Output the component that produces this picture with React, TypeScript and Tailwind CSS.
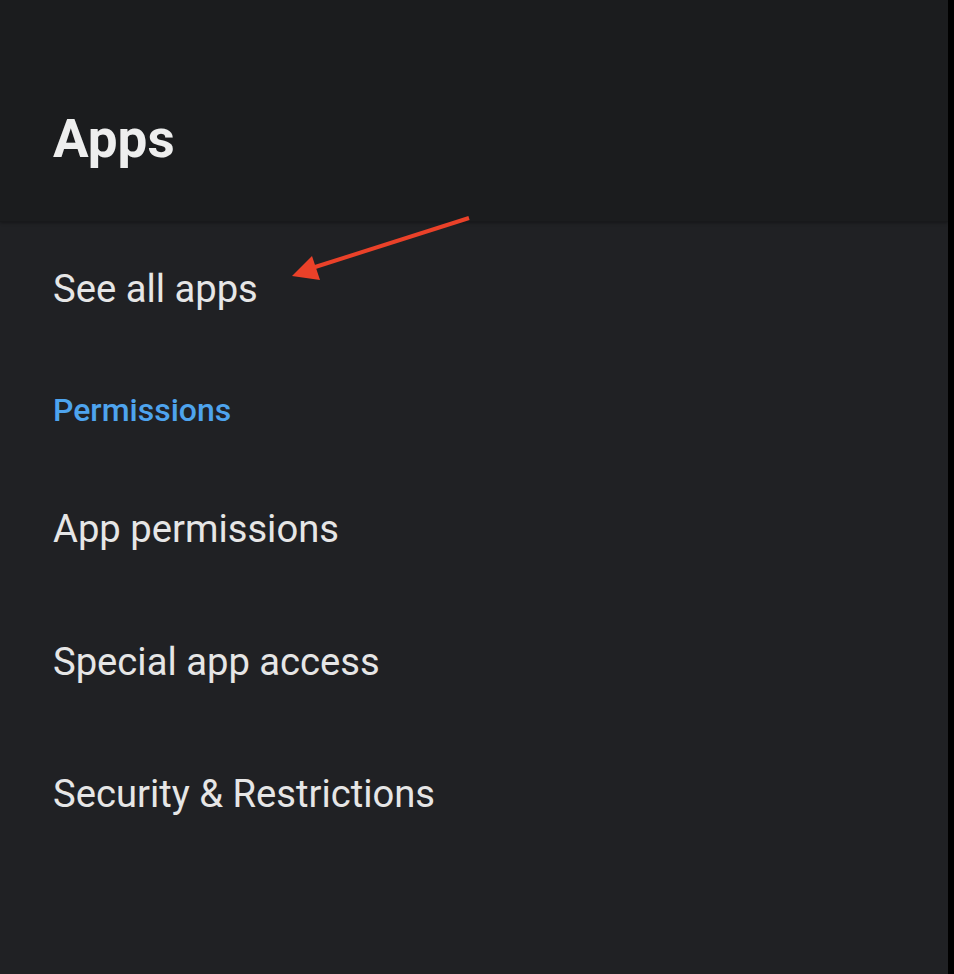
import React from 'react';

const items = [
  { label: 'See all apps', kind: 'item' },
  { label: 'Permissions', kind: 'section' },
  { label: 'App permissions', kind: 'item' },
  { label: 'Special app access', kind: 'item' },
  { label: 'Security & Restrictions', kind: 'item' },
];

export default function App() {
  return (
    <div className="relative flex h-[974px] w-[954px] bg-black font-['Roboto',sans-serif]">
      <div className="flex w-[948px] flex-col bg-[#202124]">
        <header className="flex h-[222px] items-start border-b border-[#18191b] bg-[#1b1c1e] pl-[53px] pt-[113px] shadow-[0_1px_3px_rgba(0,0,0,0.35)]">
          <h1 className="text-[53px] leading-none font-bold text-[#eeeeee]">Apps</h1>
        </header>
        <ul className="flex flex-col pl-[53px] pt-[1px]">
          {items.map((it) =>
            it.kind === 'section' ? (
              <li key={it.label} className="flex h-[108px] items-center text-[32px] font-medium text-[#4ea4ee]">
                {it.label}
              </li>
            ) : (
              <li key={it.label} className="flex h-[132.5px] items-center text-[38.2px] text-[#e6e6e6]">
                {it.label}
              </li>
            )
          )}
        </ul>
      </div>

      {/* annotation arrow */}
      <svg className="pointer-events-none absolute left-0 top-0" width="954" height="974">
        <line x1="469" y1="218" x2="312" y2="268" stroke="#ea4129" strokeWidth="4" />
        <polygon points="292,276 312,256 320,280" fill="#ea4129" />
      </svg>
    </div>
  );
}
